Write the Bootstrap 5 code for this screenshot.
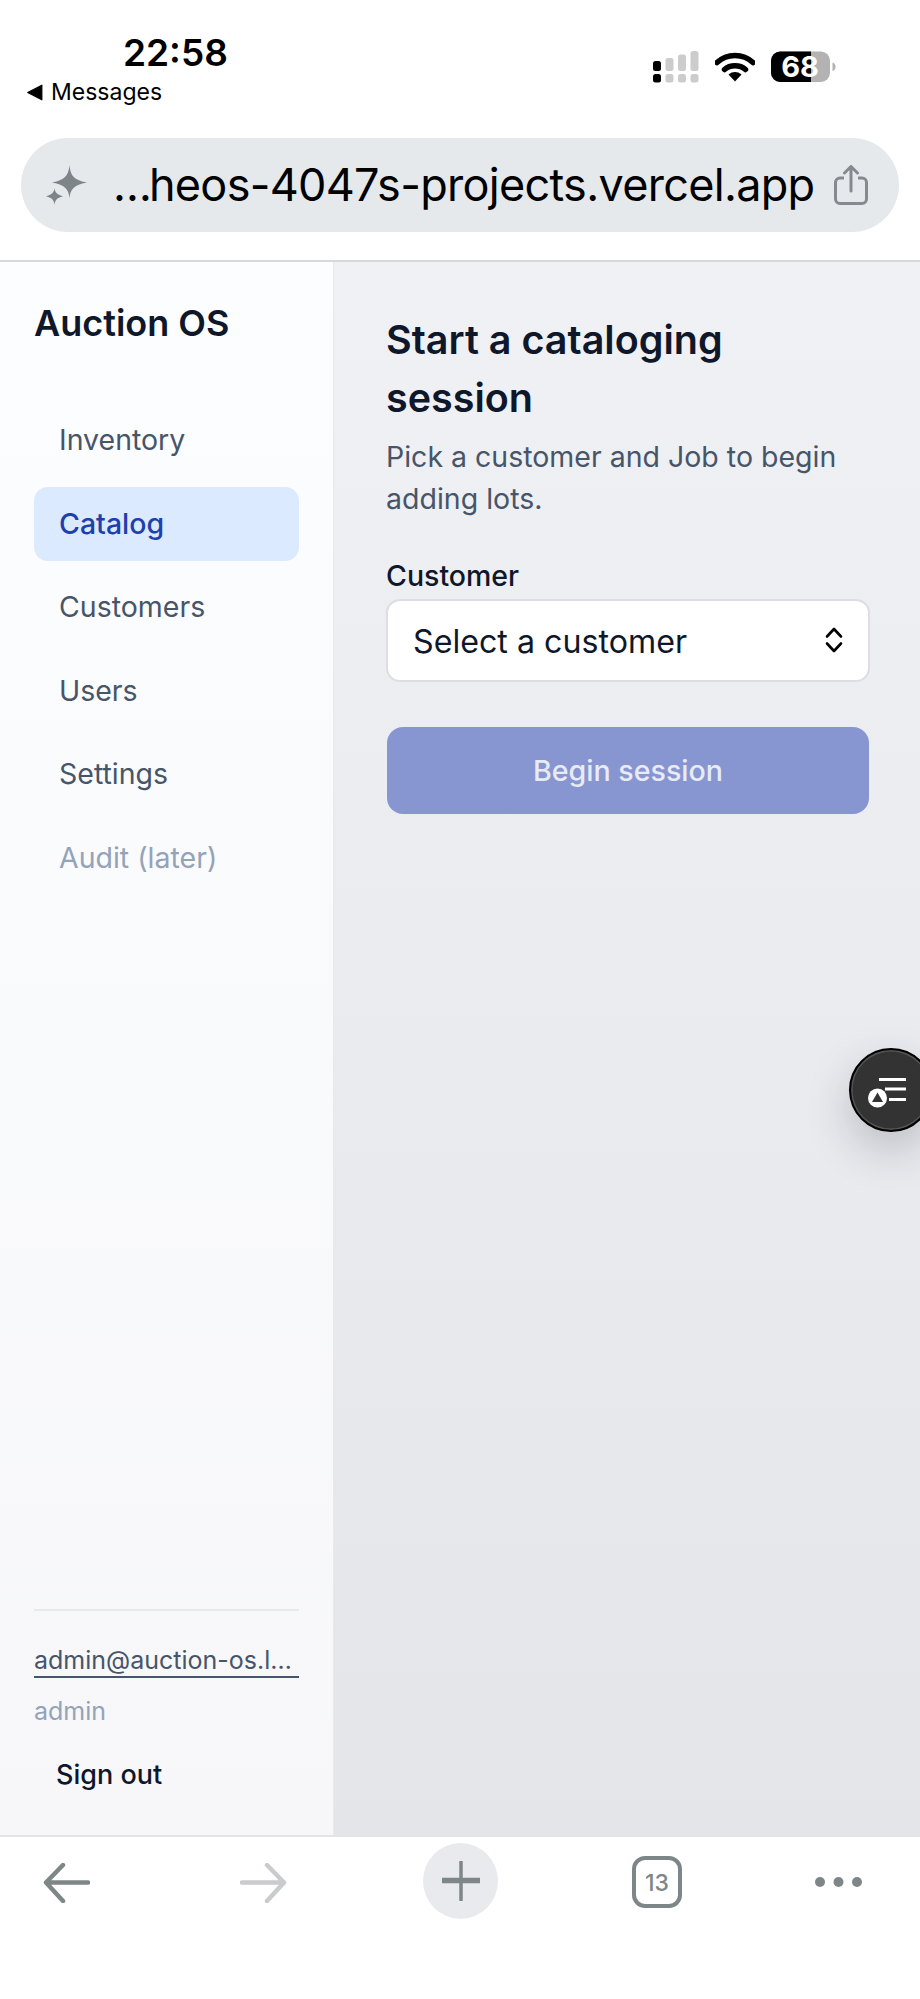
<!DOCTYPE html>
<html lang="en">
<head>
<meta charset="utf-8">
<title>Auction OS</title>
<link rel="stylesheet" href="https://cdn.jsdelivr.net/npm/bootstrap@5.3.0/dist/css/bootstrap.min.css">
<style>
html,body{height:100%;margin:0;overflow:hidden;background:#fff;font-family:Inter,"Liberation Sans",sans-serif;}
.shell{height:1999px;}
.statusbar{height:138px;}
.clock{font-size:37px;line-height:40px;font-weight:600;color:#000;margin:33px 0 5px 123px;}
.back-app{font-size:23px;line-height:28px;color:#000;margin-left:26px;gap:8px;}
.back-tri{width:17px;height:17px;}
.indicators{margin:51px 84px 0 0;gap:16px;}
.urlwrap{height:124px;padding:0 21px 28px;border-bottom:2px solid #d8d9dc;}
.urlbar{height:94px;border-radius:47px;background:#e6e9ec;padding:0 31px 0 25px;}
.urltext{font-size:45px;line-height:56px;color:#000;margin-left:26px;letter-spacing:-.7px;white-space:nowrap;}
.ell{letter-spacing:-3px;}
.app{flex:1 1 auto;min-height:0;}
.sidebar{width:334px;padding:39px 34px 25px 34px;background:linear-gradient(180deg,#fcfdfe,#f7f7fa);border-right:1px solid #e8e9ec;}
.brand{font-size:36px;line-height:44px;font-weight:600;color:#0f172a;margin-bottom:58px;}
.sidebar .nav{gap:9px;}
.sidebar .nav-link{height:74.5px;padding:0 25px;font-size:28.5px;line-height:74.5px;color:#475569;border-radius:14px;}
.sidebar .nav-link.active{background:#dbeafe;color:#1e40af;font-weight:500;}
.sidebar .nav-link.disabled{color:#94a3b8;}
.foot{border-top:2px solid #e8e9ec;padding-top:33px;}
.mail{display:block;font-size:25px;line-height:32px;height:34px;color:#475569;border-bottom:2px solid #475569;text-decoration:none;margin-bottom:16px;}
.role{font-size:25px;line-height:34px;color:#94a3b8;margin-bottom:8px;}
.signout{display:block;height:74.5px;line-height:77px;padding:0 0 0 22px;font-size:27px;font-weight:500;color:#0f172a;text-align:left;border:0;background:none;}
.content{flex:1 1 auto;padding:49px 50px 0 52px;background:linear-gradient(180deg,#f0f1f4,#e4e5e9);}
.content h1{font-size:39.5px;line-height:58px;font-weight:600;color:#0f172a;margin:0 0 9px;}
.lead-sm{font-size:28.5px;line-height:41.5px;color:#475569;margin-bottom:39px;}
.content .form-label{font-size:28.5px;line-height:36px;font-weight:500;color:#0f172a;margin-bottom:5px;display:block;}
.content .form-select{height:82.5px;font-size:32.2px;line-height:40px;padding:3px 60px 0 25px;color:#0f172a;border:2px solid #dcdee3;border-radius:14px;margin-bottom:45px;background-size:20px 26px;background-position:right 24px center;background-image:url("data:image/svg+xml,%3Csvg xmlns='http://www.w3.org/2000/svg' viewBox='0 0 20 26'%3E%3Cpath d='M3 9.5L10 2l7 7.5M3 16.5L10 24l7-7.5' fill='none' stroke='%23000' stroke-width='2.6' stroke-linecap='round' stroke-linejoin='round'/%3E%3C/svg%3E");}
.begin,.begin:disabled{height:87px;padding-top:8px;font-size:28.6px;font-weight:500;background:#8796d0;border:0;border-radius:16px;color:#e8ebf6;opacity:1;margin-left:1px;width:calc(100% - 2px);}
.fab{position:absolute;left:849px;top:786px;width:84px;height:84px;border-radius:50%;background:#333;border:2px solid #000;box-shadow:inset 0 0 0 1.5px #555,0 18px 44px rgba(30,35,50,.22);}
.toolbar{height:164px;border-top:2px solid #e3e4e6;background:#fff;padding:6px 0 0 43px;}
.t-forward{margin-left:149.5px;}
.t-plus{margin-left:136.5px;width:75px;height:76px;border-radius:50%;background:#e9eaed;}
.t-tabs{margin-left:133.5px;}
.t-more{margin-left:133.5px;}
.t-back,.t-forward{margin-top:20px;}
.t-tabs{margin-top:13px;}
.t-more{margin-top:33px;}
</style>
</head>
<body>
<div class="shell d-flex flex-column">
  <div class="statusbar d-flex justify-content-between align-items-start">
    <div>
      <div class="clock">22:58</div>
      <div class="back-app d-flex align-items-center">
        <svg class="back-tri" viewBox="0 0 15 15"><path d="M14 1v13L1.500 7.500z" fill="#000" stroke="#000" stroke-linejoin="round"/></svg>
        <span>Messages</span>
      </div>
    </div>
    <div class="indicators d-flex align-items-center">
      <svg width="46" height="32" viewBox="0 0 46 32">
        <rect x="0" y="10" width="8" height="10" rx="2.500" fill="#000"/>
        <rect x="12.500" y="7" width="8" height="13" rx="2.500" fill="#ccc"/>
        <rect x="25" y="3.500" width="8" height="16.500" rx="2.500" fill="#ccc"/>
        <rect x="37.500" y="0" width="8" height="20" rx="2.500" fill="#ccc"/>
        <rect x="0" y="23" width="8" height="8.500" rx="2.500" fill="#000"/>
        <rect x="12.500" y="23" width="8" height="8.500" rx="2.500" fill="#ccc"/>
        <rect x="25" y="23" width="8" height="8.500" rx="2.500" fill="#ccc"/>
        <rect x="37.500" y="23" width="8" height="8.500" rx="2.500" fill="#ccc"/>
      </svg>
      <svg width="40" height="30" viewBox="0 0 40 30">
        <path d="M2 10.500C12 1 28 1 38 10.500" fill="none" stroke="#000" stroke-width="5.500" stroke-linecap="round"/>
        <path d="M9.500 17.500C15 12.500 25 12.500 30.500 17.500" fill="none" stroke="#000" stroke-width="5.500" stroke-linecap="round"/>
        <path d="M13.500 22.500c4-3.300 9-3.300 13 0L20 29.500z" fill="#000"/>
      </svg>
      <svg width="65" height="32" viewBox="0 0 65 32">
        <rect x="0" y="0.500" width="59" height="30.500" rx="9" fill="#b3b3b3"/>
        <path d="M9 .5h31v30.500H9a9 9 0 0 1-9-9V9.500a9 9 0 0 1 9-9z" fill="#000"/>
        <path d="M61.500 11.500c2 .5 3 2 3 4.200s-1 3.700-3 4.300z" fill="#b3b3b3"/>
        <text x="29" y="26" text-anchor="middle" font-family="Inter,sans-serif" font-size="29" font-weight="700" fill="#fff">68</text>
      </svg>
    </div>
  </div>

  <div class="urlwrap">
    <div class="urlbar d-flex align-items-center">
      <svg class="flex-shrink-0" width="41" height="40" viewBox="0 0 41 40">
        <path d="M23.500 0c1 10 3.500 15 17.500 17.500C27.500 20 24.500 24.500 23.500 33 22.500 24.500 19.500 20 6 17.500 19.500 15 22.500 10 23.500 0z" fill="#7d8589"/>
        <path d="M8.500 23c.5 4 1.800 6.300 8.500 8.300C10.500 33 9 35.500 8.500 40 8 35.500 6.500 33 0 31.300 6.700 29.300 8 27 8.500 23z" fill="#7d8589"/>
      </svg>
      <span class="urltext flex-grow-1"><span class="ell">…</span>heos-4047s-projects.vercel.app</span>
      <svg class="flex-shrink-0" width="34" height="40" viewBox="0 0 34 40">
        <path d="M10 13H6a4.500 4.500 0 0 0-4.500 4.500v16.500A4.500 4.500 0 0 0 6 38.500h22a4.500 4.500 0 0 0 4.500-4.500V17.500A4.500 4.500 0 0 0 28 13h-4" fill="none" stroke="#848b8f" stroke-width="3"/>
        <path d="M17 26V2M10.500 8L17 1.500 23.500 8" fill="none" stroke="#848b8f" stroke-width="3" stroke-linecap="round" stroke-linejoin="round"/>
      </svg>
    </div>
  </div>

  <div class="app d-flex position-relative overflow-hidden">
    <aside class="sidebar d-flex flex-column flex-shrink-0">
      <div class="brand">Auction OS</div>
      <nav class="nav nav-pills flex-column">
        <a class="nav-link" href="#">Inventory</a>
        <a class="nav-link active" href="#">Catalog</a>
        <a class="nav-link" href="#">Customers</a>
        <a class="nav-link" href="#">Users</a>
        <a class="nav-link" href="#">Settings</a>
        <a class="nav-link disabled" href="#">Audit (later)</a>
      </nav>
      <div class="foot mt-auto">
        <a class="mail text-truncate" href="#">admin@auction-os.local</a>
        <div class="role">admin</div>
        <button class="signout btn" type="button">Sign out</button>
      </div>
    </aside>
    <main class="content">
      <h1>Start a cataloging session</h1>
      <p class="lead-sm">Pick a customer and Job to begin adding lots.</p>
      <label class="form-label" for="cust">Customer</label>
      <select class="form-select" id="cust"><option>Select a customer</option></select>
      <button class="btn btn-primary begin" type="button" disabled>Begin session</button>
    </main>
    <div class="fab d-flex">
      <svg width="80" height="80" viewBox="0 0 80 80">
        <path d="M28 29.500h27M34 39h21M38 49.500h17" stroke="#fff" stroke-width="3" fill="none"/>
        <circle cx="26.500" cy="48" r="9.500" fill="#fff"/>
        <path d="M26.500 42.500l5.500 9.500h-11z" fill="#333"/>
      </svg>
    </div>
  </div>

  <div class="toolbar d-flex align-items-start">
    <svg class="t-back" width="47" height="40" viewBox="0 0 47 40">
      <path d="M45 19.500H3M20 2L3 19.500 20 38" fill="none" stroke="#7f8688" stroke-width="4.500" stroke-linecap="round" stroke-linejoin="round"/>
    </svg>
    <svg class="t-forward" width="47" height="40" viewBox="0 0 47 40">
      <path d="M2 19.500H44M27 2L44 19.500 27 38" fill="none" stroke="#c9cbcc" stroke-width="4.500" stroke-linecap="round" stroke-linejoin="round"/>
    </svg>
    <div class="t-plus d-flex align-items-center justify-content-center">
      <svg width="38" height="40" viewBox="0 0 38 40"><path d="M0 19.500h38" stroke="#7f8688" stroke-width="5.500" stroke-linecap="round"/><path d="M19 1v38" stroke="#7f8688" stroke-width="3.500" stroke-linecap="round"/></svg>
    </div>
    <svg class="t-tabs" width="50" height="52" viewBox="0 0 50 52">
      <rect x="2" y="2" width="46" height="48" rx="11" fill="none" stroke="#7f8688" stroke-width="4"/>
      <text x="25" y="35" text-anchor="middle" font-family="Inter,sans-serif" font-size="23" font-weight="500" fill="#7f8688">13</text>
    </svg>
    <svg class="t-more" width="47" height="12" viewBox="0 0 47 12">
      <circle cx="5" cy="6" r="5" fill="#7f8688"/><circle cx="23.500" cy="6" r="5" fill="#7f8688"/><circle cx="42" cy="6" r="5" fill="#7f8688"/>
    </svg>
  </div>
</div>
<script src="https://cdn.jsdelivr.net/npm/bootstrap@5.3.0/dist/js/bootstrap.bundle.min.js"></script>
</body>
</html>
